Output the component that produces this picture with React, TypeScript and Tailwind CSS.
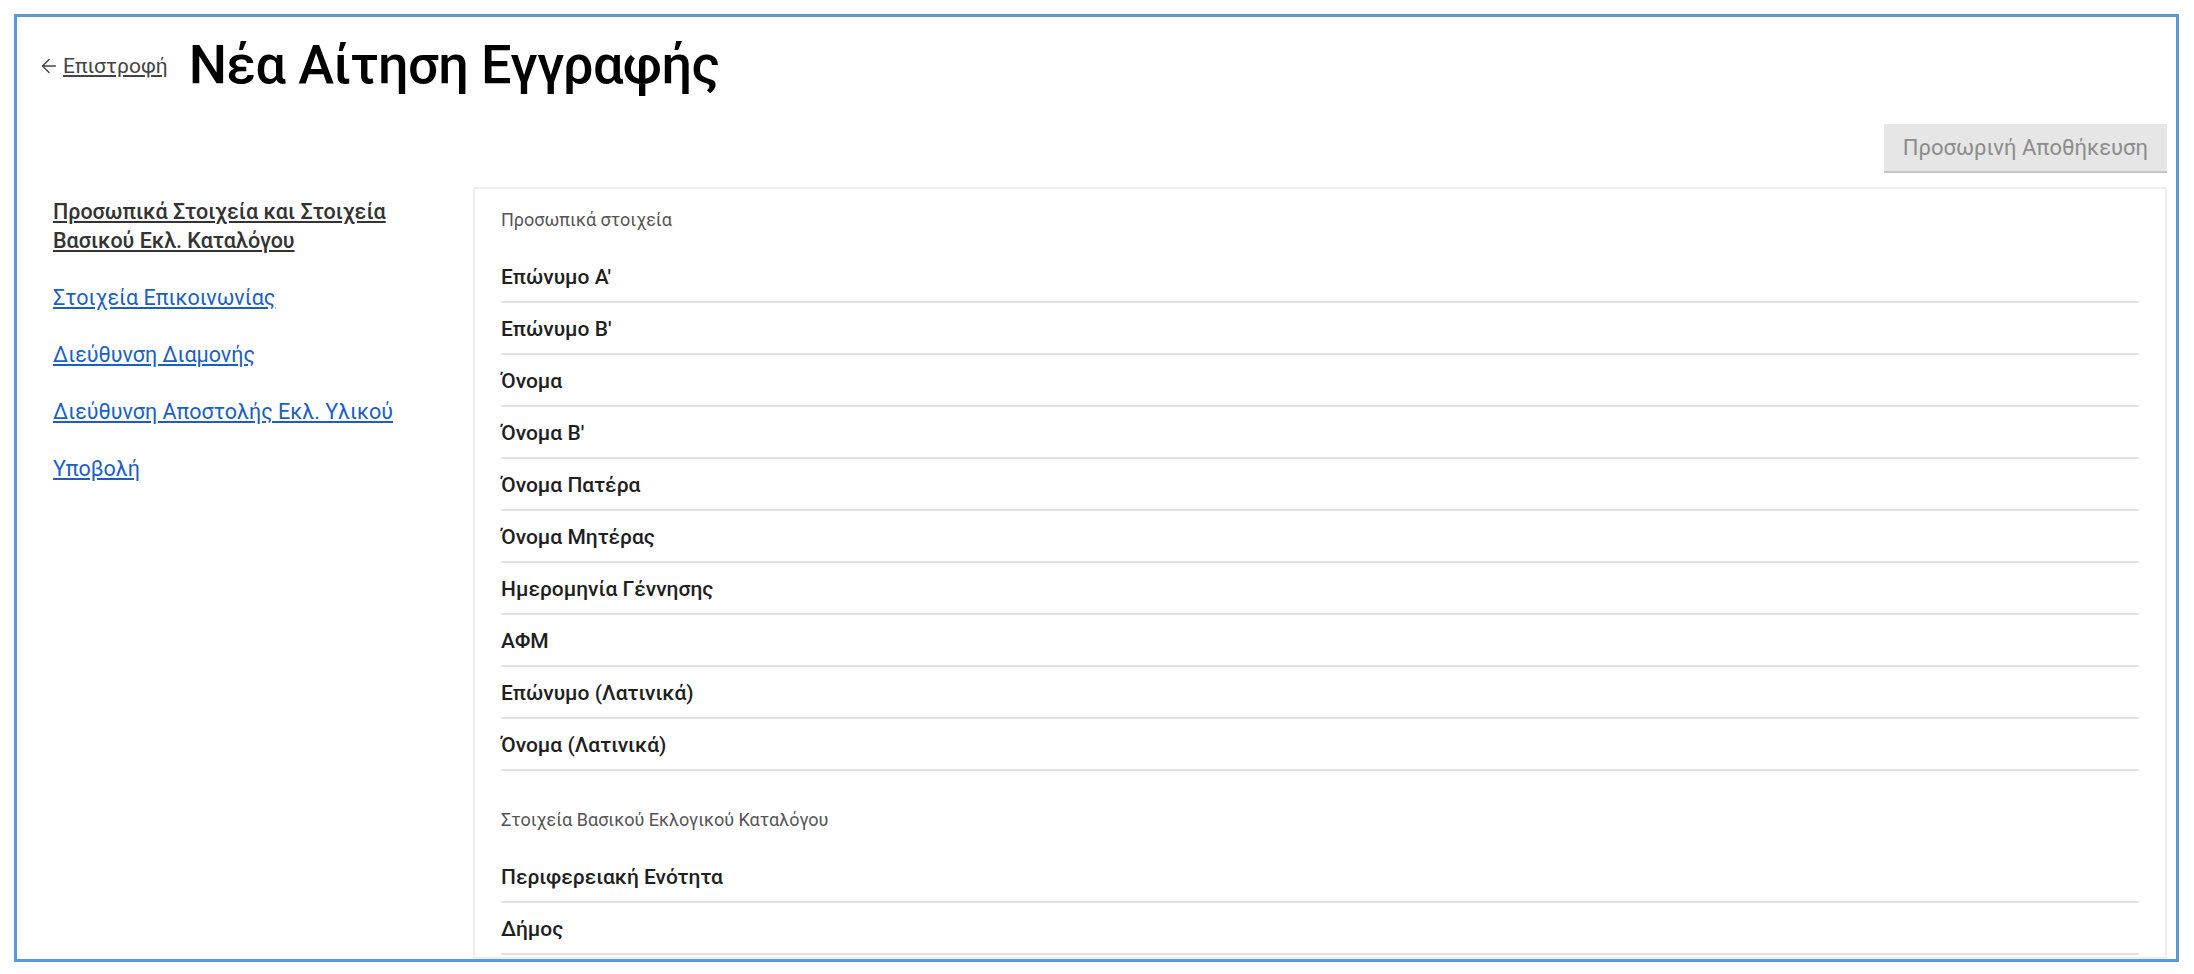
import { ArrowLeft } from 'lucide-react';

const personal = [
  "Επώνυμο Α'",
  "Επώνυμο Β'",
  'Όνομα',
  "Όνομα Β'",
  'Όνομα Πατέρα',
  'Όνομα Μητέρας',
  'Ημερομηνία Γέννησης',
  'ΑΦΜ',
  'Επώνυμο (Λατινικά)',
  'Όνομα (Λατινικά)',
];

const catalog = ['Περιφερειακή Ενότητα', 'Δήμος'];

const nav = ['Στοιχεία Επικοινωνίας', 'Διεύθυνση Διαμονής', 'Διεύθυνση Αποστολής Εκλ. Υλικού', 'Υποβολή'];

const Row = ({ label }: { label: string }) => (
  <div className="pt-[12px] pb-[10px] border-b-2 border-[#e2e2e2] text-[21px] leading-[28px] font-medium text-[#1f1f1f]">
    {label}
  </div>
);

export default function App() {
  return (
    <div className="w-[2194px] h-[974px] bg-white font-['Roboto',sans-serif] pt-[14px] pl-[14px]">
      <div className="w-[2165px] h-[948px] border-[3px] border-[#5b9bd5] overflow-hidden flex flex-col">
        {/* Κεφαλίδα */}
        <div className="flex items-center pl-[21px] pt-[18px]">
          <a href="#" className="flex items-center text-[#444] mt-[2px]">
            <ArrowLeft size={22} strokeWidth={1.5} className="mr-[3px]" />
            <span className="text-[21px] leading-[28px] underline underline-offset-2">Επιστροφή</span>
          </a>
          <h1 className="ml-[21px] text-[54px] leading-[60px] font-medium tracking-[-0.6px] text-black">
            Νέα Αίτηση Εγγραφής
          </h1>
        </div>

        <div className="flex justify-end pr-[9px] mt-[29px]">
          <button className="h-[47px] px-[19px] bg-[#e6e6e6] text-[#8c8c8c] text-[22px] shadow-[0_2px_0_#c6c6c6]">
            Προσωρινή Αποθήκευση
          </button>
        </div>

        <div className="flex mt-[16px] pr-[9px] flex-1 min-h-0">
          {/* Πλευρικό μενού */}
          <div className="w-[456px] shrink-0 pl-[36px] pt-[10px]">
            <div className="w-[380px] flex flex-col gap-[28px] text-[21.5px] leading-[29px]">
              <a href="#" className="text-[#333] font-medium underline underline-offset-2">
                Προσωπικά Στοιχεία και Στοιχεία Βασικού Εκλ. Καταλόγου
              </a>
              {nav.map((n) => (
                <a key={n} href="#" className="text-[#1c5fc4] underline underline-offset-2">
                  {n}
                </a>
              ))}
            </div>
          </div>

          {/* Φόρμα */}
          <div className="flex-1 border-2 border-[#eeeeee] px-[26px] pt-[19px]">
            <div className="text-[18px] leading-[24px] text-[#555]">Προσωπικά στοιχεία</div>
            <div className="mt-[19px]">
              {personal.map((p) => (
                <Row key={p} label={p} />
              ))}
            </div>
            <div className="mt-[37px] text-[18px] leading-[24px] text-[#555]">Στοιχεία Βασικού Εκλογικού Καταλόγου</div>
            <div className="mt-[19px]">
              {catalog.map((p) => (
                <Row key={p} label={p} />
              ))}
            </div>
          </div>
        </div>
      </div>
    </div>
  );
}
